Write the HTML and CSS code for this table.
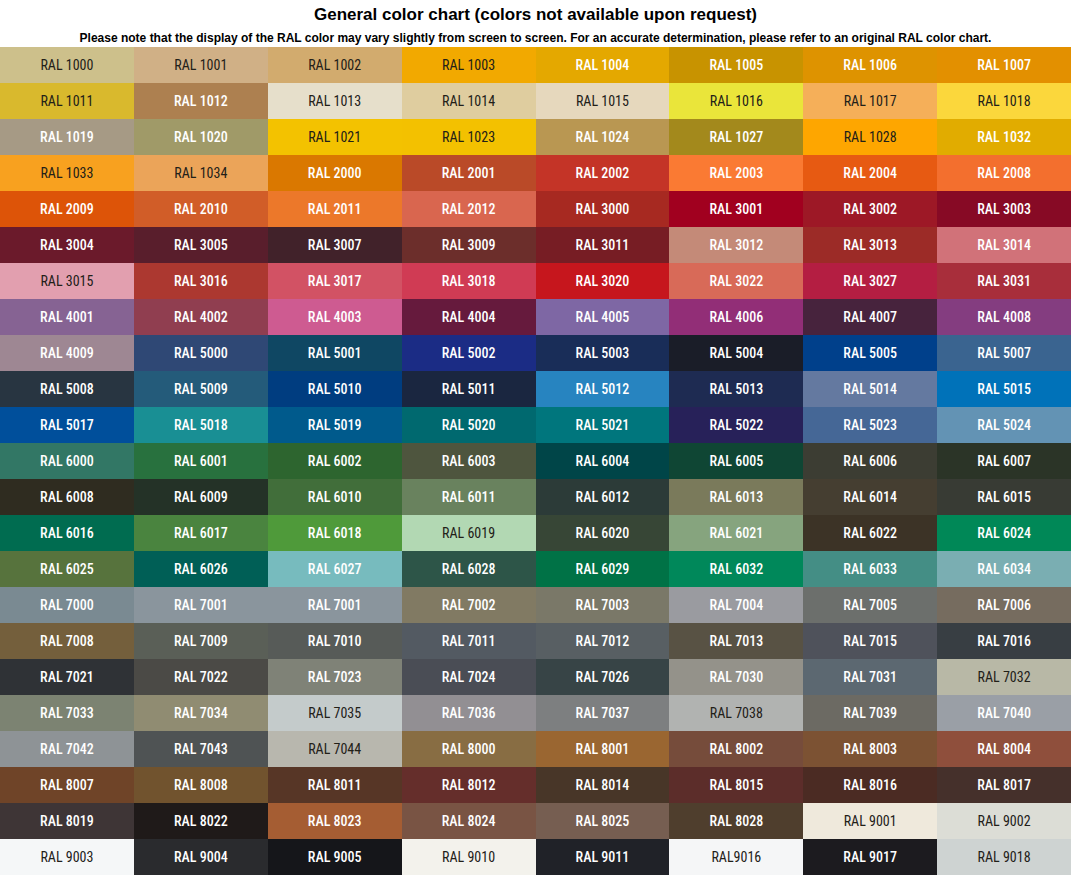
FILE: index.html
```html
<!DOCTYPE html>
<html lang="en">
<head>
<meta charset="utf-8">
<title>General color chart</title>
<link rel="stylesheet" href="styles.css">
</head>
<body>
<header class="head">
  <h1 class="title">General color chart (colors not available upon request)</h1>
  <p class="note">Please note that the display of the RAL color may vary slightly from screen to screen. For an accurate determination, please refer to an original RAL color chart.</p>
</header>
<main class="chart">
  <div class="sw dk" style="background:#CDC08B">RAL 1000</div>
  <div class="sw dk" style="background:#D0B086">RAL 1001</div>
  <div class="sw dk" style="background:#D2AB6E">RAL 1002</div>
  <div class="sw dk" style="background:#F2A900">RAL 1003</div>
  <div class="sw" style="background:#E4A800">RAL 1004</div>
  <div class="sw" style="background:#C89300">RAL 1005</div>
  <div class="sw" style="background:#DE9300">RAL 1006</div>
  <div class="sw" style="background:#E39000">RAL 1007</div>

  <div class="sw dk" style="background:#D9B92D">RAL 1011</div>
  <div class="sw" style="background:#AD8050">RAL 1012</div>
  <div class="sw dk" style="background:#E6DFCB">RAL 1013</div>
  <div class="sw dk" style="background:#DFCD9F">RAL 1014</div>
  <div class="sw dk" style="background:#E6D8BD">RAL 1015</div>
  <div class="sw dk" style="background:#EAE53A">RAL 1016</div>
  <div class="sw dk" style="background:#F5AF59">RAL 1017</div>
  <div class="sw dk" style="background:#FBD73C">RAL 1018</div>

  <div class="sw" style="background:#A69A85">RAL 1019</div>
  <div class="sw" style="background:#A09A68">RAL 1020</div>
  <div class="sw dk" style="background:#F3C200">RAL 1021</div>
  <div class="sw dk" style="background:#F3C100">RAL 1023</div>
  <div class="sw" style="background:#B99752">RAL 1024</div>
  <div class="sw" style="background:#A3891C">RAL 1027</div>
  <div class="sw dk" style="background:#FEA600">RAL 1028</div>
  <div class="sw" style="background:#E1AC00">RAL 1032</div>

  <div class="sw dk" style="background:#F8A11F">RAL 1033</div>
  <div class="sw dk" style="background:#EBA459">RAL 1034</div>
  <div class="sw" style="background:#DA7800">RAL 2000</div>
  <div class="sw" style="background:#BA4A28">RAL 2001</div>
  <div class="sw" style="background:#C43427">RAL 2002</div>
  <div class="sw" style="background:#FA7A33">RAL 2003</div>
  <div class="sw" style="background:#E75A12">RAL 2004</div>
  <div class="sw" style="background:#F36F2E">RAL 2008</div>

  <div class="sw" style="background:#DD5408">RAL 2009</div>
  <div class="sw" style="background:#D15D28">RAL 2010</div>
  <div class="sw" style="background:#EC782A">RAL 2011</div>
  <div class="sw" style="background:#D9664F">RAL 2012</div>
  <div class="sw" style="background:#A72921">RAL 3000</div>
  <div class="sw" style="background:#A1001F">RAL 3001</div>
  <div class="sw" style="background:#9D1826">RAL 3002</div>
  <div class="sw" style="background:#870A25">RAL 3003</div>

  <div class="sw" style="background:#6B1A2B">RAL 3004</div>
  <div class="sw" style="background:#591E2C">RAL 3005</div>
  <div class="sw" style="background:#41222A">RAL 3007</div>
  <div class="sw" style="background:#6C2E2B">RAL 3009</div>
  <div class="sw" style="background:#771D24">RAL 3011</div>
  <div class="sw" style="background:#C48A78">RAL 3012</div>
  <div class="sw" style="background:#9C2B27">RAL 3013</div>
  <div class="sw" style="background:#D17279">RAL 3014</div>

  <div class="sw dk" style="background:#E29FAF">RAL 3015</div>
  <div class="sw" style="background:#AC3830">RAL 3016</div>
  <div class="sw" style="background:#D25264">RAL 3017</div>
  <div class="sw" style="background:#D03B54">RAL 3018</div>
  <div class="sw" style="background:#C6161D">RAL 3020</div>
  <div class="sw" style="background:#D86A58">RAL 3022</div>
  <div class="sw" style="background:#B41E42">RAL 3027</div>
  <div class="sw" style="background:#A82E3B">RAL 3031</div>

  <div class="sw" style="background:#866393">RAL 4001</div>
  <div class="sw" style="background:#903E50">RAL 4002</div>
  <div class="sw" style="background:#CE5B91">RAL 4003</div>
  <div class="sw" style="background:#661A3D">RAL 4004</div>
  <div class="sw" style="background:#7E67A4">RAL 4005</div>
  <div class="sw" style="background:#922E77">RAL 4006</div>
  <div class="sw" style="background:#47233D">RAL 4007</div>
  <div class="sw" style="background:#843D80">RAL 4008</div>

  <div class="sw" style="background:#9E8793">RAL 4009</div>
  <div class="sw" style="background:#2F4875">RAL 5000</div>
  <div class="sw" style="background:#0F4763">RAL 5001</div>
  <div class="sw" style="background:#1B2C85">RAL 5002</div>
  <div class="sw" style="background:#192D58">RAL 5003</div>
  <div class="sw" style="background:#1A1D28">RAL 5004</div>
  <div class="sw" style="background:#00408B">RAL 5005</div>
  <div class="sw" style="background:#3A6490">RAL 5007</div>

  <div class="sw" style="background:#283541">RAL 5008</div>
  <div class="sw" style="background:#245B7A">RAL 5009</div>
  <div class="sw" style="background:#003D80">RAL 5010</div>
  <div class="sw" style="background:#1A2640">RAL 5011</div>
  <div class="sw" style="background:#2784C0">RAL 5012</div>
  <div class="sw" style="background:#1E2B52">RAL 5013</div>
  <div class="sw" style="background:#6479A0">RAL 5014</div>
  <div class="sw" style="background:#0072B9">RAL 5015</div>

  <div class="sw" style="background:#004F9B">RAL 5017</div>
  <div class="sw" style="background:#198F94">RAL 5018</div>
  <div class="sw" style="background:#005A8C">RAL 5019</div>
  <div class="sw" style="background:#00696F">RAL 5020</div>
  <div class="sw" style="background:#00767D">RAL 5021</div>
  <div class="sw" style="background:#272159">RAL 5022</div>
  <div class="sw" style="background:#456796">RAL 5023</div>
  <div class="sw" style="background:#6393B4">RAL 5024</div>

  <div class="sw" style="background:#327765">RAL 6000</div>
  <div class="sw" style="background:#28713E">RAL 6001</div>
  <div class="sw" style="background:#2D652F">RAL 6002</div>
  <div class="sw" style="background:#4E553E">RAL 6003</div>
  <div class="sw" style="background:#004548">RAL 6004</div>
  <div class="sw" style="background:#0F4634">RAL 6005</div>
  <div class="sw" style="background:#3C3D33">RAL 6006</div>
  <div class="sw" style="background:#2B3427">RAL 6007</div>

  <div class="sw" style="background:#2F2C20">RAL 6008</div>
  <div class="sw" style="background:#243227">RAL 6009</div>
  <div class="sw" style="background:#416E3A">RAL 6010</div>
  <div class="sw" style="background:#69825E">RAL 6011</div>
  <div class="sw" style="background:#2C3B38">RAL 6012</div>
  <div class="sw" style="background:#7A7A5B">RAL 6013</div>
  <div class="sw" style="background:#453E31">RAL 6014</div>
  <div class="sw" style="background:#383B34">RAL 6015</div>

  <div class="sw" style="background:#006C50">RAL 6016</div>
  <div class="sw" style="background:#4A843F">RAL 6017</div>
  <div class="sw" style="background:#4F9A3A">RAL 6018</div>
  <div class="sw dk" style="background:#B2D8B3">RAL 6019</div>
  <div class="sw" style="background:#374636">RAL 6020</div>
  <div class="sw" style="background:#86A47E">RAL 6021</div>
  <div class="sw" style="background:#3C3326">RAL 6022</div>
  <div class="sw" style="background:#008857">RAL 6024</div>

  <div class="sw" style="background:#57733D">RAL 6025</div>
  <div class="sw" style="background:#005F56">RAL 6026</div>
  <div class="sw" style="background:#77BBBE">RAL 6027</div>
  <div class="sw" style="background:#2D5548">RAL 6028</div>
  <div class="sw" style="background:#007246">RAL 6029</div>
  <div class="sw" style="background:#00885A">RAL 6032</div>
  <div class="sw" style="background:#448E85">RAL 6033</div>
  <div class="sw" style="background:#7AAEB2">RAL 6034</div>

  <div class="sw" style="background:#7A8A92">RAL 7000</div>
  <div class="sw" style="background:#8A959D">RAL 7001</div>
  <div class="sw" style="background:#8A959D">RAL 7001</div>
  <div class="sw" style="background:#817A63">RAL 7002</div>
  <div class="sw" style="background:#7A7868">RAL 7003</div>
  <div class="sw" style="background:#9A9BA0">RAL 7004</div>
  <div class="sw" style="background:#6C6F6C">RAL 7005</div>
  <div class="sw" style="background:#766C5F">RAL 7006</div>

  <div class="sw" style="background:#745F3C">RAL 7008</div>
  <div class="sw" style="background:#5A5F57">RAL 7009</div>
  <div class="sw" style="background:#575B58">RAL 7010</div>
  <div class="sw" style="background:#535A62">RAL 7011</div>
  <div class="sw" style="background:#585F63">RAL 7012</div>
  <div class="sw" style="background:#585244">RAL 7013</div>
  <div class="sw" style="background:#4F525B">RAL 7015</div>
  <div class="sw" style="background:#383E43">RAL 7016</div>

  <div class="sw" style="background:#2F3236">RAL 7021</div>
  <div class="sw" style="background:#4B4A46">RAL 7022</div>
  <div class="sw" style="background:#7F8277">RAL 7023</div>
  <div class="sw" style="background:#4A4D55">RAL 7024</div>
  <div class="sw" style="background:#374446">RAL 7026</div>
  <div class="sw" style="background:#94928A">RAL 7030</div>
  <div class="sw" style="background:#5C6871">RAL 7031</div>
  <div class="sw dk" style="background:#B8B8A6">RAL 7032</div>

  <div class="sw" style="background:#7C8372">RAL 7033</div>
  <div class="sw" style="background:#908C72">RAL 7034</div>
  <div class="sw dk" style="background:#C4CBCB">RAL 7035</div>
  <div class="sw" style="background:#928F93">RAL 7036</div>
  <div class="sw" style="background:#7D7F80">RAL 7037</div>
  <div class="sw dk" style="background:#B1B3B1">RAL 7038</div>
  <div class="sw" style="background:#6C6A63">RAL 7039</div>
  <div class="sw" style="background:#9A9FA6">RAL 7040</div>

  <div class="sw" style="background:#8E9396">RAL 7042</div>
  <div class="sw" style="background:#4F5354">RAL 7043</div>
  <div class="sw dk" style="background:#B8B7AE">RAL 7044</div>
  <div class="sw" style="background:#886D43">RAL 8000</div>
  <div class="sw" style="background:#9A6631">RAL 8001</div>
  <div class="sw" style="background:#764C3B">RAL 8002</div>
  <div class="sw" style="background:#7C5233">RAL 8003</div>
  <div class="sw" style="background:#8F4F3C">RAL 8004</div>

  <div class="sw" style="background:#6F4428">RAL 8007</div>
  <div class="sw" style="background:#71532E">RAL 8008</div>
  <div class="sw" style="background:#573626">RAL 8011</div>
  <div class="sw" style="background:#652E2B">RAL 8012</div>
  <div class="sw" style="background:#483628">RAL 8014</div>
  <div class="sw" style="background:#5C2D2A">RAL 8015</div>
  <div class="sw" style="background:#4B2B23">RAL 8016</div>
  <div class="sw" style="background:#45302B">RAL 8017</div>

  <div class="sw" style="background:#3E3536">RAL 8019</div>
  <div class="sw" style="background:#1F1A19">RAL 8022</div>
  <div class="sw" style="background:#A55D33">RAL 8023</div>
  <div class="sw" style="background:#795444">RAL 8024</div>
  <div class="sw" style="background:#765E51">RAL 8025</div>
  <div class="sw" style="background:#4F3E2D">RAL 8028</div>
  <div class="sw dk" style="background:#EFE9DC">RAL 9001</div>
  <div class="sw dk" style="background:#DCDDD6">RAL 9002</div>

  <div class="sw dk" style="background:#F5F7F8">RAL 9003</div>
  <div class="sw" style="background:#2A2B2E">RAL 9004</div>
  <div class="sw" style="background:#15161A">RAL 9005</div>
  <div class="sw dk" style="background:#F3F2EC">RAL 9010</div>
  <div class="sw" style="background:#202228">RAL 9011</div>
  <div class="sw dk" style="background:#F5F6F7">RAL9016</div>
  <div class="sw" style="background:#1C1B1F">RAL 9017</div>
  <div class="sw dk" style="background:#CED3D2">RAL 9018</div>
</main>
</body>
</html>
```

FILE: styles.css
```css
* {
  box-sizing: border-box;
}

html, body {
  margin: 0;
  padding: 0;
  background: #ffffff;
}

.head {
  height: 47px;
  padding-top: 5px;
  text-align: center;
  font-family: "Liberation Sans", Arial, sans-serif;
  color: #000;
}

.title {
  margin: 0;
  font-size: 17px;
  line-height: 20px;
  font-weight: bold;
}

.note {
  margin: 6px 0 0;
  font-size: 12px;
  line-height: 14px;
  font-weight: bold;
}

.chart {
  display: grid;
  grid-template-columns: repeat(8, 1fr);
  grid-auto-rows: 36px;
}

.sw {
  display: flex;
  align-items: center;
  justify-content: center;
  font-family: "Roboto Condensed", "Liberation Sans Narrow", "DejaVu Sans Condensed", Roboto, sans-serif;
  font-size: 14px;
  font-weight: 500;
  color: #ffffff;
  white-space: nowrap;
}

.sw.dk {
  font-weight: 400;
  color: #222018;
}
```
